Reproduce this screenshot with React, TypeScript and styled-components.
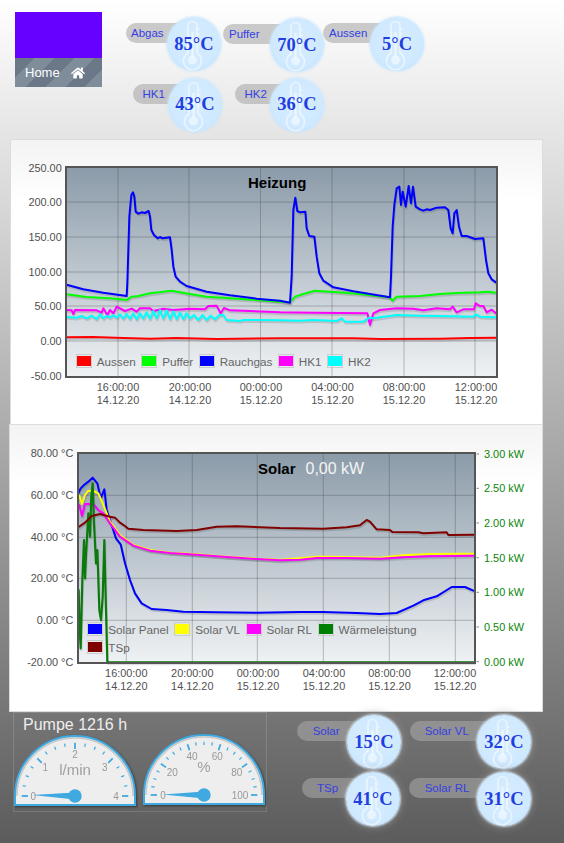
import React from "react";
import styled, { createGlobalStyle } from "styled-components";
import { FaHome } from "react-icons/fa";

const GlobalStyle = createGlobalStyle`
    html, body {
        margin: 0;
        padding: 0;
    }
    body {
        font-family: "Liberation Sans", Arial, sans-serif;
    }
`;

const Page = styled.div`
    width: 564px;
    height: 843px;
    overflow: hidden;
    background: linear-gradient(to bottom, #ffffff 0%, #5c5c5c 100%);
`;

const Header = styled.div`
    height: 140px;
    display: flex;
    align-items: flex-start;
    padding: 12px 0 0 15px;
    box-sizing: border-box;
`;

const Tile = styled.div`
    width: 87px;
    height: 75px;
    display: flex;
    flex-direction: column;
`;

const TileColor = styled.div`
    height: 46px;
    background: #6600ff;
`;

const HomeBar = styled.div`
    flex: 1;
    display: flex;
    align-items: center;
    gap: 11px;
    padding-left: 10px;
    color: #ffffff;
    font-size: 13px;
    background: repeating-linear-gradient(135deg, #6a7888 0 14px, #7f8c9a 14px 28px);
`;

const SensorColumn = styled.div<{ $left: number; $top: number; $gap: number }>`
    display: flex;
    flex-direction: column;
    gap: ${(p) => p.$gap}px;
    margin-left: ${(p) => p.$left}px;
    margin-top: ${(p) => p.$top}px;
`;

const SensorRow = styled.div`
    display: flex;
    height: 54px;
`;

const SensorBox = styled.div<{ $width: number; $left: number; $down: number }>`
    width: ${(p) => p.$width}px;
    margin-left: ${(p) => p.$left}px;
    margin-top: ${(p) => p.$down}px;
    display: flex;
    align-items: flex-start;
    flex-shrink: 0;
`;

const Pill = styled.div<{ $pad: number }>`
    flex: 1;
    height: 20px;
    margin-top: 6px;
    margin-right: -27px;
    padding-left: ${(p) => p.$pad}px;
    border-radius: 10px;
    background: rgba(167, 167, 167, 0.58);
    color: #3540e2;
    font-size: 11.5px;
    line-height: 20px;
    white-space: nowrap;
`;

const Bubble = styled.div<{ $dark: boolean }>`
    position: relative;
    width: 54px;
    height: 54px;
    flex-shrink: 0;
    box-sizing: border-box;
    border-radius: 50%;
    display: flex;
    align-items: center;
    justify-content: center;
    background: radial-gradient(circle at 50% 45%, #d8edff 0%, #cfe9ff 62%, #bde0fd 100%);
    box-shadow: ${(p) =>
        p.$dark
            ? "0 0 2px 1px rgba(225, 240, 255, 0.8), 0 0 7px 3px rgba(150, 150, 150, 0.45)"
            : "0 0 2px 1px rgba(200, 230, 255, 0.7)"};
`;

const ThermoIcon = styled.svg`
    position: absolute;
    left: 0;
    top: 0;
`;

const Temp = styled.span`
    position: relative;
    font-family: "Liberation Serif", "Times New Roman", serif;
    font-weight: bold;
    font-size: 18.5px;
    color: #1f3fe0;
`;

const ChartPanel = styled.div<{ $left: number; $width: number; $height: number; $pad: number }>`
    margin-left: ${(p) => p.$left}px;
    width: ${(p) => p.$width}px;
    height: ${(p) => p.$height}px;
    padding-top: ${(p) => p.$pad}px;
    box-sizing: border-box;
    background: linear-gradient(to bottom, #f3f3f3 0, #ffffff 60px);
    box-shadow: 0 0 0 1px #dcdcdc;
`;

const ChartFrame = styled.div`
    position: relative;
`;

const ChartSvg = styled.svg`
    display: block;
    font-family: "Liberation Sans", Arial, sans-serif;
    font-size: 10.9px;
    fill: #505050;
`;

const ChartTitle = styled.div<{ $left: number; $top: number }>`
    position: absolute;
    left: ${(p) => p.$left}px;
    top: ${(p) => p.$top}px;
    display: flex;
    align-items: center;
    gap: 10px;
    color: #000000;
    font-size: 15px;
    font-weight: bold;
    line-height: 20px;
`;

const TitleValue = styled.span`
    color: #f4f4f4;
    font-size: 16px;
    font-weight: normal;
`;

const Legend = styled.div<{ $left: number; $top: number; $width: number }>`
    position: absolute;
    left: ${(p) => p.$left}px;
    top: ${(p) => p.$top}px;
    width: ${(p) => p.$width}px;
    display: flex;
    flex-wrap: wrap;
    gap: 4px 5.5px;
`;

const LegendItem = styled.div`
    display: flex;
    align-items: center;
    gap: 5px;
    height: 14px;
    color: #666666;
    font-size: 11.7px;
    white-space: nowrap;
`;

const Swatch = styled.span<{ $color: string }>`
    width: 14px;
    height: 10px;
    padding: 1px 0;
    border: 1px solid #cccccc;
    background: ${(p) => p.$color} content-box;
`;

const Bottom = styled.div`
    display: flex;
    align-items: flex-start;
`;

const PumpBox = styled.div`
    width: 254px;
    height: 100px;
    margin: 1px 0 0 13px;
    box-sizing: border-box;
    border: 1px solid rgba(255, 255, 255, 0.14);
    flex-shrink: 0;
`;

const PumpTitle = styled.div`
    height: 22px;
    padding-left: 9px;
    color: #eeeeee;
    font-size: 16px;
    line-height: 23px;
`;

const GaugeRow = styled.div`
    display: flex;
    align-items: flex-start;
    gap: 6.5px;
`;

const GaugeSvg = styled.svg<{ $up: number }>`
    display: block;
    margin-top: ${(p) => -p.$up}px;
    overflow: visible;
    filter: drop-shadow(1px 1px 1px rgba(0, 0, 0, 0.45));
    font-family: "Liberation Sans", Arial, sans-serif;
`;

const BLUE = "#3fa9e0";

type Series = { color: string; width?: number; points: string };

// points are in 3x page coordinates, measured off the reference
const heatSeries: Series[] = [
    {
        color: "#ff0000",
        points: "170,562 250,561 340,564 420,566 500,564 620,567 810,565 1030,565 1110,567 1290,566 1380,564 1458,563",
    },
    {
        color: "#00ff00",
        points: "170,433 230,441 300,445 350,450 365,440 385,438 420,430 485,422 540,432 590,440 660,445 740,450 810,455 840,457 855,440 880,432 915,422 970,426 1050,432 1140,442 1147,452 1160,440 1230,438 1290,432 1340,429 1410,427 1435,425 1458,428",
    },
    {
        color: "#0000ff",
        points: "170,404 220,418 280,428 350,438 352,400 358,200 364,135 369,127 373,140 377,185 385,191 395,187 405,189 416,183 420,200 424,240 432,255 443,265 450,261 458,265 480,262 485,300 490,350 497,380 510,395 530,408 590,425 660,436 740,446 810,452 840,458 845,380 850,180 856,143 862,183 870,187 886,185 890,235 898,258 913,260 920,320 928,370 940,392 970,412 1030,424 1140,442 1143,380 1148,230 1153,165 1160,115 1168,110 1173,165 1178,125 1187,170 1196,108 1203,160 1209,110 1217,170 1230,178 1240,182 1250,178 1260,180 1280,173 1305,172 1315,180 1322,235 1328,250 1333,190 1340,180 1347,230 1355,258 1370,258 1395,267 1420,265 1428,330 1435,370 1445,388 1458,397",
    },
    {
        color: "#ff00ff",
        points: "170,480 185,481 190,492 195,480 260,481 275,488 280,475 292,495 300,480 310,490 320,470 345,483 365,476 380,485 390,475 420,475 430,483 460,476 490,480 540,476 585,478 595,468 620,467 632,490 642,474 660,481 810,487 910,488 1072,490 1080,525 1090,490 1110,480 1160,475 1210,476 1240,481 1280,475 1320,478 1328,470 1340,487 1360,478 1392,478 1397,460 1410,468 1420,468 1430,487 1445,479 1458,490",
    },
    {
        color: "#00ffff",
        points: "170,501 200,503 215,498 230,505 245,497 260,507 270,493 280,505 290,497 300,503 310,495 320,503 330,493 340,505 350,492 360,506 370,490 380,508 390,490 400,505 410,487 420,506 430,483 440,505 450,480 460,505 470,481 480,507 490,484 500,507 510,487 520,507 530,490 540,505 552,495 565,510 578,495 590,510 602,497 615,508 628,495 640,495 650,510 690,513 700,510 810,511 870,512 910,510 980,513 995,505 1005,515 1060,515 1078,503 1090,505 1110,502 1160,495 1230,497 1330,499 1390,500 1397,493 1410,500 1458,502",
    },
];

const solarSeries: Series[] = [
    {
        color: "#0000ff",
        points: "205,190 212,175 222,165 235,155 248,143 262,160 272,205 283,178 290,240 300,270 318,325 332,343 345,400 360,450 375,490 395,520 425,537 470,540 520,545 620,547 740,548 870,546 940,546 1040,549 1110,552 1160,549 1210,527 1240,511 1280,499 1325,471 1365,471 1390,482",
    },
    {
        color: "#ffff00",
        points: "208,197 216,222 225,195 235,182 250,183 265,190 280,225 300,275 330,315 370,345 420,360 480,368 560,373 650,380 740,386 810,389 870,385 920,380 1010,381 1110,383 1180,376 1260,372 1390,371",
    },
    {
        color: "#ff00ff",
        points: "208,225 216,258 225,222 250,222 265,240 280,250 300,280 330,320 370,347 420,362 480,369 560,374 650,381 740,387 810,391 870,389 920,384 1010,384 1110,386 1180,382 1260,379 1390,377",
    },
    {
        color: "#0a7a0a",
        width: 6.5,
        points: "206,480 209,600 212,655 217,450 222,330 225,445 228,375 235,250 240,320 244,200 248,160 252,280 258,400 262,360 268,540 273,570 278,500 283,330 288,540 292,697 1392,697",
    },
    {
        color: "#800000",
        points: "206,291 225,278 245,258 270,252 300,260 315,263 330,278 345,288 355,296 400,300 500,303 560,300 620,290 680,289 810,294 940,296 1010,292 1050,286 1070,270 1080,275 1100,298 1140,300 1147,306 1225,307 1240,310 1310,307 1315,315 1392,314",
    },
];

const Thermometer = () => (
    <ThermoIcon width="54" height="54" viewBox="0 0 54 54" fill="none" stroke="rgba(255,255,255,0.55)" strokeWidth="1.6">
        <path d="M21 36V9a4.5 4.5 0 0 1 9 0v27a9 9 0 1 1-9 0z" />
        <circle cx="25.5" cy="43" r="4.5" fill="rgba(255,255,255,0.5)" stroke="none" />
        <path d="M25.5 40V15" strokeWidth="2.2" />
        <path d="M30 12h3M30 17h3M30 22h3M30 27h3" strokeWidth="1" />
    </ThermoIcon>
);

const Sensor = ({
    label,
    value,
    width,
    left = 0,
    down = 0,
    pad,
    dark = false,
}: {
    label: string;
    value: string;
    width: number;
    left?: number;
    down?: number;
    pad: number;
    dark?: boolean;
}) => (
    <SensorBox $width={width} $left={left} $down={down}>
        <Pill $pad={pad}>{label}</Pill>
        <Bubble $dark={dark}>
            <Thermometer />
            <Temp>{value}</Temp>
        </Bubble>
    </SensorBox>
);

const SeriesLines = ({ series, ox, oy }: { series: Series[]; ox: number; oy: number }) => (
    <g transform={`translate(${ox},${oy}) scale(0.33333)`} fill="none" strokeLinejoin="round" strokeLinecap="round">
        {series.map((s) => (
            <polyline key={s.color + "s"} points={s.points} stroke="rgba(0,0,0,0.13)" strokeWidth={7} transform="translate(2,5)" />
        ))}
        {series.map((s) => (
            <polyline key={s.color} points={s.points} stroke={s.color} strokeWidth={s.width ?? 6} />
        ))}
    </g>
);

const PlotArea = ({
    id,
    x,
    y,
    w,
    h,
    gridX,
    gridY,
}: {
    id: string;
    x: number;
    y: number;
    w: number;
    h: number;
    gridX: number[];
    gridY: number[];
}) => (
    <>
        <defs>
            <linearGradient id={id} x1="0" y1="0" x2="0" y2="1">
                <stop offset="0" stopColor="#8b9ba9" />
                <stop offset="1" stopColor="#eff2f4" />
            </linearGradient>
        </defs>
        <rect x={x} y={y} width={w} height={h} fill={`url(#${id})`} />
        {gridX.map((g) => (
            <line key={g} x1={g} x2={g} y1={y} y2={y + h} stroke="rgba(70,70,70,0.33)" />
        ))}
        {gridY.map((g) => (
            <line key={g} x1={x} x2={x + w} y1={g} y2={g} stroke="rgba(70,70,70,0.33)" />
        ))}
    </>
);

const TimeLabels = ({ items, y }: { items: [number, string, string][]; y: number }) => (
    <g textAnchor="middle">
        {items.map(([x, time, date]) => (
            <React.Fragment key={time}>
                <text x={x} y={y}>{time}</text>
                <text x={x} y={y + 12.8}>{date}</text>
            </React.Fragment>
        ))}
    </g>
);

const HeatChart = () => {
    const gridX = [118, 189, 260.5, 332, 404, 475];
    const gridY = [202, 237, 272, 306, 341];
    const yLabels: [string, number][] = [
        ["250.00", 167.5],
        ["200.00", 202],
        ["150.00", 237],
        ["100.00", 272],
        ["50.00", 306],
        ["0.00", 341],
        ["-50.00", 376],
    ];
    return (
        <ChartFrame>
            <ChartSvg width="531" height="270" viewBox="11 150 531 270">
                <PlotArea id="heatBg" x={66} y={167} w={431} h={210} gridX={gridX} gridY={gridY} />
                <SeriesLines series={heatSeries} ox={10} oy={150} />
                <rect x={66} y={167} width={431} height={210} fill="none" stroke="#555555" strokeWidth={2} />
                <g textAnchor="end">
                    {yLabels.map(([t, y]) => (
                        <text key={t} x={61.7} y={y + 4}>{t}</text>
                    ))}
                </g>
                <TimeLabels
                    y={391.3}
                    items={[
                        [118, "16:00:00", "14.12.20"],
                        [190, "20:00:00", "14.12.20"],
                        [261, "00:00:00", "15.12.20"],
                        [332.5, "04:00:00", "15.12.20"],
                        [404, "08:00:00", "15.12.20"],
                        [476, "12:00:00", "15.12.20"],
                    ]}
                />
            </ChartSvg>
            <ChartTitle $left={237} $top={23}>Heizung</ChartTitle>
            <Legend $left={64.7} $top={204} $width={420}>
                {[
                    ["Aussen", "#ff0000"],
                    ["Puffer", "#00ff00"],
                    ["Rauchgas", "#0000ff"],
                    ["HK1", "#ff00ff"],
                    ["HK2", "#00ffff"],
                ].map(([name, color]) => (
                    <LegendItem key={name}>
                        <Swatch $color={color} />
                        {name}
                    </LegendItem>
                ))}
            </Legend>
        </ChartFrame>
    );
};

const SolarChart = () => {
    const gridX = [126.3, 192.3, 257.3, 323.3, 389.3, 455.3];
    const gridY = [495.3, 537.3, 578.3, 620.3];
    const left: [string, number][] = [
        ["80.00 °C", 453.3],
        ["60.00 °C", 495.3],
        ["40.00 °C", 537.3],
        ["20.00 °C", 578.3],
        ["0.00 °C", 620.3],
        ["-20.00 °C", 662],
    ];
    const right: [string, number][] = [
        ["3.00 kW", 454],
        ["2.50 kW", 488.3],
        ["2.00 kW", 523],
        ["1.50 kW", 557.7],
        ["1.00 kW", 592.3],
        ["0.50 kW", 627],
        ["0.00 kW", 661.7],
    ];
    return (
        <ChartFrame>
            <ChartSvg width="532" height="270" viewBox="10 430 532 270">
                <PlotArea id="solarBg" x={78} y={453} w={397} h={210} gridX={gridX} gridY={gridY} />
                <SeriesLines series={solarSeries} ox={10} oy={430} />
                <rect x={78} y={453} width={397} height={210} fill="none" stroke="#555555" strokeWidth={2} />
                <g textAnchor="end">
                    {left.map(([t, y]) => (
                        <text key={t} x={73.3} y={y + 4}>{t}</text>
                    ))}
                </g>
                {right.map(([t, y]) => (
                    <React.Fragment key={t}>
                        <line x1={476.5} x2={479} y1={y} y2={y} stroke="#8a8a8a" />
                        <text x={484} y={y + 4} fill="#0a860a">{t}</text>
                    </React.Fragment>
                ))}
                <TimeLabels
                    y={677.3}
                    items={[
                        [126.3, "16:00:00", "14.12.20"],
                        [192.3, "20:00:00", "14.12.20"],
                        [258, "00:00:00", "15.12.20"],
                        [324, "04:00:00", "15.12.20"],
                        [389.5, "08:00:00", "15.12.20"],
                        [455, "12:00:00", "15.12.20"],
                    ]}
                />
            </ChartSvg>
            <ChartTitle $left={248} $top={29}>
                Solar
                <TitleValue>0,00 kW</TitleValue>
            </ChartTitle>
            <Legend $left={77.3} $top={192} $width={345}>
                {[
                    ["Solar Panel", "#0000ff"],
                    ["Solar VL", "#ffff00"],
                    ["Solar RL", "#ff00ff"],
                    ["Wärmeleistung", "#008000"],
                    ["TSp", "#800000"],
                ].map(([name, color]) => (
                    <LegendItem key={name}>
                        <Swatch $color={color} />
                        {name}
                    </LegendItem>
                ))}
            </Legend>
        </ChartFrame>
    );
};

const Gauge = ({
    majors,
    unit,
    labels,
    tip,
    up = 0,
}: {
    majors: number;
    unit: string;
    labels: [string, number, number][];
    tip: [number, number];
    up?: number;
}) => {
    const cx = 61;
    const cy = 61;
    const divisions = majors * 4;
    const ticks = Array.from({ length: divisions + 1 }, (_, i) => {
        const angle = Math.PI - (i / divisions) * Math.PI;
        const inner = i % 4 === 0 ? 47 : 50;
        return {
            x1: cx + Math.cos(angle) * inner,
            y1: cy - Math.sin(angle) * inner,
            x2: cx + Math.cos(angle) * 53.3,
            y2: cy - Math.sin(angle) * 53.3,
            major: i % 4 === 0,
        };
    });
    return (
        <GaugeSvg $up={up} width="122" height="71" viewBox="0 0 122 71">
            <path d="M1 61A60 60 0 0 1 121 61V70H1Z" fill="#eeeeee" stroke={BLUE} strokeWidth="2" />
            <path d="M3 61A58 58 0 0 1 119 61" fill="none" stroke="rgba(0,0,0,0.16)" strokeWidth="1.5" />
            {ticks.map((t, i) => (
                <line key={i} x1={t.x1} y1={t.y1} x2={t.x2} y2={t.y2} stroke={BLUE} strokeWidth={t.major ? 1.8 : 1.2} />
            ))}
            <g fill="#999999" fontSize="10" textAnchor="middle">
                {labels.map(([t, x, y]) => (
                    <text key={t} x={cx + x} y={cy + y + 3.6}>{t}</text>
                ))}
            </g>
            <text x={cx} y={unit === "%" ? cy - 23 : cy - 21} fill="#a0a0a0" fontSize="15" textAnchor="middle">{unit}</text>
            <polygon points={`${cx + tip[0]},${cy + tip[1]} ${cx},${cy + 3.5} ${cx},${cy - 3.5}`} fill={BLUE} />
            <circle cx={cx} cy={cy} r="6.7" fill={BLUE} />
        </GaugeSvg>
    );
};

const App = () => (
    <Page>
        <GlobalStyle />
        <Header>
            <Tile>
                <TileColor />
                <HomeBar>
                    Home
                    <FaHome size={14} />
                </HomeBar>
            </Tile>
            <SensorColumn $left={24} $top={5.3} $gap={6.5}>
                <SensorRow>
                    <Sensor label="Abgas" value="85°C" width={95} pad={5} />
                    <Sensor label="Puffer" value="70°C" width={101} left={2} down={1} pad={6} />
                    <Sensor label="Aussen" value="5°C" width={101} left={-1} pad={6} />
                </SensorRow>
                <SensorRow>
                    <Sensor label="HK1" value="43°C" width={89} left={7} pad={9.5} />
                    <Sensor label="HK2" value="36°C" width={89} left={13} pad={9.5} />
                </SensorRow>
            </SensorColumn>
        </Header>
        <ChartPanel $left={11} $width={531} $height={285} $pad={10}>
            <HeatChart />
        </ChartPanel>
        <ChartPanel $left={10} $width={532} $height={286} $pad={5}>
            <SolarChart />
        </ChartPanel>
        <Bottom>
            <PumpBox>
                <PumpTitle>Pumpe 1216 h</PumpTitle>
                <GaugeRow>
                    <Gauge
                        majors={4}
                        unit="l/min"
                        tip={[-43, -1]}
                        labels={[
                            ["0", -41.7, 0],
                            ["1", -29.7, -28.7],
                            ["2", 0, -41.3],
                            ["3", 29.7, -28.7],
                            ["4", 41, 0],
                        ]}
                    />
                    <Gauge
                        majors={5}
                        unit="%"
                        up={1}
                        tip={[-41, -0.5]}
                        labels={[
                            ["0", -41, 0],
                            ["20", -31.7, -23],
                            ["40", -12, -39],
                            ["60", 13.3, -39],
                            ["80", 32.7, -23],
                            ["100", 36, 0],
                        ]}
                    />
                </GaugeRow>
            </PumpBox>
            <SensorColumn $left={30} $top={4} $gap={3.3}>
                <SensorRow>
                    <Sensor label="Solar" value="15°C" width={104} pad={15.7} dark />
                    <Sensor label="Solar VL" value="32°C" width={121} left={9} pad={14.7} dark />
                </SensorRow>
                <SensorRow>
                    <Sensor label="TSp" value="41°C" width={98} left={5} pad={15} dark />
                    <Sensor label="Solar RL" value="31°C" width={122} left={9} pad={15.7} dark />
                </SensorRow>
            </SensorColumn>
        </Bottom>
    </Page>
);

export default App;
